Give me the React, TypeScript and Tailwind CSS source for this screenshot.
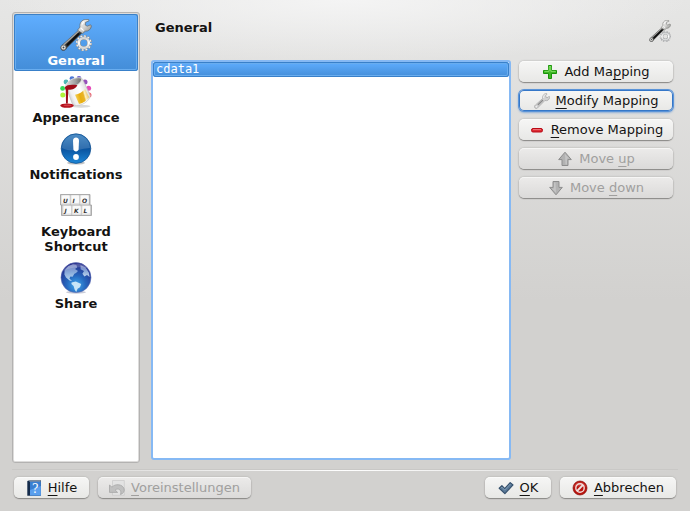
import React from 'react';

type IconProps = { className?: string };

const ToolsIcon: React.FC<IconProps> = ({ className }) => (
  <svg viewBox="0 0 32 32" className={className} aria-hidden="true">
    <defs>
      <linearGradient id="steel" x1="0" y1="0" x2="1" y2="1">
        <stop offset="0" stopColor="#ffffff" />
        <stop offset="0.5" stopColor="#d6d6d4" />
        <stop offset="1" stopColor="#848582" />
      </linearGradient>
      <linearGradient id="gear" x1="0" y1="0" x2="0" y2="1">
        <stop offset="0" stopColor="#d0d2d3" />
        <stop offset="0.5" stopColor="#ffffff" />
        <stop offset="1" stopColor="#d3d5d6" />
      </linearGradient>
    </defs>
    <path d="M19.5 10.2 L1.4 26.4 C-.4 28.4 .6 31.5 3.2 31.7 C5.2 31.8 6.4 30.4 6.9 29 L22.6 13.4 Z" fill="#3a3a39" />
    <path d="M18.6 11.2 L3 25.5 L4 26.6 L19.8 12.2 Z" fill="#a3a3a1" />
    <path d="M7.5 25.8 L18.5 15" stroke="#0f0f0f" strokeWidth="2" strokeLinecap="round" />
    <circle cx="3.5" cy="28.5" r="2.3" fill="#efefed" stroke="#8b8b89" strokeWidth="0.8" />
    <circle cx="3.5" cy="28.5" r="1" fill="#454545" />
    <path
      d="M20 8 C19.4 4 21.6 .8 25.8 .4 L28.6 .5 L29 1.8 L25.6 3.3 L25.2 6 L27.2 7.2 L30.6 5.8 L31.4 7 C31 10.2 28.6 12.4 25.2 12.2 L22.6 14.6 L17.6 11.2 Z"
      fill="url(#steel)"
      stroke="#5a5a58"
      strokeWidth="0.6"
    />
    <path d="M20.8 9 L23.6 11.6 M22 5.5 L24 2.4" stroke="#fff" strokeWidth="1.2" />
    <circle cx="23.8" cy="24" r="6.7" fill="none" stroke="#8b8d8f" strokeWidth="3" strokeDasharray="2.3 1.208" />
    <circle cx="23.8" cy="24" r="6.6" fill="none" stroke="#f2f2f2" strokeWidth="2.2" strokeDasharray="1.8 1.656" />
    <circle cx="23.8" cy="24" r="4.9" fill="none" stroke="#8f9193" strokeWidth="3.2" />
    <circle cx="23.8" cy="24" r="5" fill="none" stroke="url(#gear)" strokeWidth="2.4" />
  </svg>
);

const PaintIcon: React.FC<IconProps> = ({ className }) => (
  <svg viewBox="0 0 32 32" className={className} aria-hidden="true">
    <defs>
      <linearGradient id="can" x1="0.1" y1="0.7" x2="0.95" y2="0.3">
        <stop offset="0" stopColor="#c4c4c4" />
        <stop offset="0.2" stopColor="#f2f2f2" />
        <stop offset="0.6" stopColor="#ffffff" />
        <stop offset="0.85" stopColor="#e2e2e2" />
        <stop offset="1" stopColor="#a6a6a6" />
      </linearGradient>
      <linearGradient id="label" x1="0" y1="0.6" x2="1" y2="0.3">
        <stop offset="0" stopColor="#f5d564" />
        <stop offset="0.35" stopColor="#e9ae0e" />
        <stop offset="0.6" stopColor="#e8b429" />
        <stop offset="0.7" stopColor="#fdf1c2" />
        <stop offset="1" stopColor="#e3b548" />
      </linearGradient>
      <linearGradient id="inside" x1="0" y1="0" x2="1" y2="0">
        <stop offset="0" stopColor="#e2e2e2" />
        <stop offset="0.6" stopColor="#a2a2a2" />
        <stop offset="1" stopColor="#6d6d6d" />
      </linearGradient>
    </defs>
    <circle cx="6" cy="6" r="2.4" fill="#4fb9b4" />
    <circle cx="12" cy="2.6" r="2.4" fill="#4d77d6" />
    <circle cx="19" cy="2.4" r="2.4" fill="#6c5cc6" />
    <circle cx="25" cy="6" r="2.5" fill="#9550bb" />
    <circle cx="28.6" cy="12.3" r="2.5" fill="#e54cba" />
    <circle cx="29" cy="19" r="2.5" fill="#f46372" />
    <circle cx="2.6" cy="12.4" r="2.4" fill="#35d957" />
    <circle cx="2.8" cy="19" r="2.5" fill="#b0f33b" />
    <ellipse cx="21" cy="30.2" rx="9.5" ry="1.5" fill="#d9d9d9" />
    <path d="M5.6 10 L20.6 2 C22 2.2 22.6 3 23 4 L30.4 19.5 C29.6 25.4 20.6 31 13.8 29.2 C12.8 28.6 12.5 28 12 27 Z" fill="url(#can)" stroke="#bcbcbc" strokeWidth="0.6" />
    <path d="M15 18.8 C19 17.9 22.6 16 25 12.9 L29.2 21.2 C27 24.6 23.4 27 19 28 Z" fill="url(#label)" />
    <path d="M5.5 10.4 C5.6 5.4 14.6 .4 21 2 C23.6 4.6 16.4 13 5.5 10.4 Z" fill="url(#inside)" stroke="#e2e2e2" strokeWidth="0.8" />
    <path d="M4.8 11.4 C6.4 8.4 12.5 8.4 17.4 9.2 C16 12.4 12 14 8.2 13.8 L7.8 27.5 L6 27.5 L5.8 14.6 Z" fill="#9f0b17" />
    <ellipse cx="7" cy="29.6" rx="6.8" ry="2.2" fill="#b5121d" />
    <ellipse cx="7.5" cy="29.3" rx="4" ry="0.9" fill="#d23b45" />
  </svg>
);

const AlertIcon: React.FC<IconProps> = ({ className }) => (
  <svg viewBox="0 0 32 32" className={className} aria-hidden="true">
    <defs>
      <linearGradient id="alert" x1="0" y1="0" x2="0" y2="1">
        <stop offset="0" stopColor="#2d78bb" />
        <stop offset="0.5" stopColor="#0a539f" />
        <stop offset="1" stopColor="#1d86d6" />
      </linearGradient>
    </defs>
    <ellipse cx="16" cy="30" rx="9" ry="1.6" fill="#c4c4c4" />
    <circle cx="16" cy="15.6" r="14.8" fill="url(#alert)" stroke="#0a4a8d" strokeWidth="0.7" />
    <path d="M2 15 C2.4 7 8.6 1.6 16 1.6 C23.4 1.6 29.6 7 30 15 C23 15.4 10 20 2 15 Z" fill="#fff" opacity="0.16" />
    <path d="M13 7.6 C13 3.4 19 3.4 19 7.6 L18.6 16.6 C18.2 19 13.8 19 13.4 16.6 Z" fill="#fff" />
    <circle cx="16" cy="24" r="2.9" fill="#fff" />
  </svg>
);

const keys = [
  { letter: 'U', x: 1, y: 6 },
  { letter: 'I', x: 10.5, y: 6 },
  { letter: 'O', x: 20, y: 6 },
  { letter: 'J', x: 2.5, y: 16.5 },
  { letter: 'K', x: 12, y: 16.5 },
  { letter: 'L', x: 21.5, y: 16.5 },
];

const KeyboardIcon: React.FC<IconProps> = ({ className }) => (
  <svg viewBox="0 0 32 32" className={className} aria-hidden="true">
    <path d="M0.5 4.5 H30 V15 H31.5 V25.5 H1.5 V15 H0.5 Z" fill="#bdbdbd" stroke="#a0a0a0" strokeWidth="0.8" />
    {keys.map((key) => (
      <g key={key.letter}>
        <rect x={key.x} y={key.y - 1} width="9" height="9.5" rx="1" fill="#e2e2e2" />
        <rect x={key.x + 1} y={key.y - 0.5} width="7.5" height="7.5" rx="1" fill="#fafafa" />
        <text
          x={key.x + 2}
          y={key.y + 6.5}
          fontSize="6"
          fontStyle="italic"
          fontFamily="DejaVu Sans, sans-serif"
          fill="#333"
        >
          {key.letter}
        </text>
      </g>
    ))}
  </svg>
);

const GlobeIcon: React.FC<IconProps> = ({ className }) => (
  <svg viewBox="0 0 32 32" className={className} aria-hidden="true">
    <defs>
      <radialGradient id="globe" cx="0.5" cy="0.75" r="0.7">
        <stop offset="0" stopColor="#3fa9ee" />
        <stop offset="0.45" stopColor="#2668be" />
        <stop offset="1" stopColor="#252c8a" />
      </radialGradient>
      <linearGradient id="land" x1="0" y1="0" x2="0" y2="1">
        <stop offset="0" stopColor="#8590cc" />
        <stop offset="0.5" stopColor="#a3c3e8" />
        <stop offset="1" stopColor="#e4f5fd" />
      </linearGradient>
    </defs>
    <ellipse cx="16" cy="30.2" rx="10" ry="1.5" fill="#c9cbd6" />
    <circle cx="16" cy="15.6" r="15" fill="url(#globe)" stroke="#5c6cb4" strokeWidth="0.6" />
    <g fill="url(#land)" opacity="0.8">
      <path d="M4.6 8.6 L8.4 4 L13 2.2 L16.4 3 L17.2 5.4 L15 7 L18 9 L16 11 L14.4 11.8 L12.6 14.8 L10.4 14.6 L9.4 16.6 L12 19 L9.6 18.6 L6 15.6 L4.4 12.6 Z" />
      <path d="M20.5 3 L25.6 5.6 L28.8 10.6 L29.6 15 L27 13 L24.4 14.6 L22.4 11.8 L24 9 L20.6 7.2 Z" />
    </g>
    <path d="M11.6 20.4 L15.8 19.4 L21.2 22 L20 25.3 L17.6 26.8 L16.2 30 L14.6 27.4 L13.6 24 L11.4 22 Z" fill="#d7eefa" opacity="0.9" />
    <path d="M3.4 9 C7 1.5 21 -1.5 27.4 6 C19 4.5 10 5 3.4 9 Z" fill="#fff" opacity="0.2" />
  </svg>
);

const WrenchIcon: React.FC<IconProps> = ({ className }) => (
  <svg viewBox="0 0 16 16" className={className} aria-hidden="true">
    <path
      d="M8.7 5.4 C8.2 2.5 10 .5 12.6 .4 L13 1.3 L11.6 2.6 L12.2 4.5 L14 4.4 L15.1 3.2 L15.7 4.2 C15.5 6.8 13.2 8.3 10.9 7.5 L4.2 14.3 C3.3 16 .7 15.8 .5 13.9 C.4 12.8 1.2 12.1 1.8 11.7 Z"
      fill="#d2d2d2"
      stroke="#a3a3a3"
      strokeWidth="0.7"
    />
    <path d="M3.8 12 L9 7" stroke="#8a8a8a" strokeWidth="1.3" />
    <path d="M9.7 5 C9.4 3 10.2 1.9 11.6 1.3" fill="none" stroke="#f8f8f8" strokeWidth="0.9" />
    <circle cx="2.3" cy="13.7" r="0.8" fill="#f4f4f4" />
  </svg>
);

const PlusIcon: React.FC<IconProps> = ({ className }) => (
  <svg viewBox="0 0 16 16" className={className} aria-hidden="true">
    <path d="M6.5 1.5 H9.5 V6.5 H14.5 V9.5 H9.5 V14.5 H6.5 V9.5 H1.5 V6.5 H6.5 Z" fill="#3fb726" stroke="#189309" strokeWidth="1" strokeLinejoin="round" />
    <path d="M7.2 7.3 V2.5 H8.8 V7.3 H13.7 M2.5 7.3 H7" fill="none" stroke="#8ce46d" strokeWidth="0.9" />
  </svg>
);

const MinusIcon: React.FC<IconProps> = ({ className }) => (
  <svg viewBox="0 0 16 16" className={className} aria-hidden="true">
    <rect x="2.5" y="6.5" width="11" height="3.5" rx="1.5" fill="#dc2830" stroke="#b90a16" strokeWidth="1" />
    <path d="M4 7.6 H12" stroke="#f1767a" strokeWidth="1" />
  </svg>
);

const ArrowIcon: React.FC<IconProps> = ({ className }) => (
  <svg viewBox="0 0 16 16" className={className} aria-hidden="true">
    <path d="M8 1.2 L14.3 8.6 H11 V14.5 H5 V8.6 H1.7 Z" fill="#b2b2b2" stroke="#8d8d8d" strokeWidth="1" strokeLinejoin="round" />
    <path d="M8 3 L12 7.6 H10 V13.4 H8.5 Z" fill="#c4c4c4" />
  </svg>
);

const BookIcon: React.FC<IconProps> = ({ className }) => (
  <svg viewBox="0 0 16 16" className={className} aria-hidden="true">
    <path d="M1.3 1 L3.7 .3 H14.8 V15.8 H1.3 Z" fill="#142b4b" />
    <rect x="4" y="1.5" width="10.8" height="14" fill="#397fd2" />
    <path d="M4 10 L14.8 6 V15.5 H4 Z" fill="#5b9fed" />
    <path d="M3.2 1 H14.3" stroke="#dbe5ed" strokeWidth="0.7" />
    <text x="6" y="13" fontSize="12" fontFamily="DejaVu Serif, serif" fill="#fff">?</text>
  </svg>
);

const UndoIcon: React.FC<IconProps> = ({ className }) => (
  <svg viewBox="0 0 16 16" className={className} aria-hidden="true">
    <path d="M3.5 .5 H15.3 V15.3 H3.5 Z" fill="#e3e3e3" stroke="#c9c9c9" strokeWidth="0.7" />
    <path d="M.5 5 L3 7.2 C6 3.4 13.6 3.8 15.2 9 C15.7 11.6 14 13.8 11.4 14.5 C13.2 10.6 9.6 7.4 6.2 10 L8.6 12.4 H.5 Z" fill="#c0c0c0" stroke="#a0a0a0" strokeWidth="0.7" strokeLinejoin="round" />
  </svg>
);

const CheckIcon: React.FC<IconProps> = ({ className }) => (
  <svg viewBox="0 0 16 16" className={className} aria-hidden="true">
    <path d="M1.2 8.2 L3.9 5.7 L6.7 8.6 L12.2 2.6 L15 4.9 L6.9 13.6 Z" fill="#5b7a99" stroke="#36516d" strokeWidth="1.2" strokeLinejoin="round" />
    <path d="M2.7 8.2 L3.9 7.1 L6.7 10.1 L12.4 4" fill="none" stroke="#8aa4bd" strokeWidth="0.8" />
  </svg>
);

const CancelIcon: React.FC<IconProps> = ({ className }) => (
  <svg viewBox="0 0 16 16" className={className} aria-hidden="true">
    <circle cx="8" cy="8" r="7" fill="#b9140e" stroke="#8b0d09" strokeWidth="0.7" />
    <path d="M2 6.5 C3.5 .8 12.5 .8 14 6.5 Z" fill="#e06761" opacity="0.45" />
    <circle cx="8" cy="8" r="4.2" fill="none" stroke="#f0dedd" strokeWidth="1.4" />
    <path d="M5.2 10.8 L10.8 5.2" stroke="#f0e6e5" strokeWidth="1.9" />
  </svg>
);

type PushButtonProps = {
  icon: React.ReactNode;
  children: React.ReactNode;
  disabled?: boolean;
  focused?: boolean;
  className?: string;
};

const PushButton: React.FC<PushButtonProps> = ({ icon, children, disabled, focused, className = '' }) => (
  <button
    type="button"
    disabled={disabled}
    className={`flex h-[21px] items-center justify-center gap-1.5 whitespace-nowrap rounded-[5px] bg-linear-to-b ${
      disabled ? 'from-[#ecebea] to-[#dbdad9] text-[#a09f9e]' : 'from-[#f6f6f5] to-[#e8e8e6] text-[#141312]'
    } ${
      focused
        ? 'shadow-[inset_0_0_0_1px_#3577c8,0_0_0_1px_#5b94d8,0_1px_2px_1px_#8fb0d8]'
        : 'shadow-[inset_0_1px_0_#fff8,0_1px_1px_#8a8987,0_0_2px_#a3a2a0]'
    } ${className}`}
  >
    {icon}
    <span>{children}</span>
  </button>
);

const Key: React.FC<{ children: string }> = ({ children }) => (
  <span className="underline decoration-1 underline-offset-3 [text-decoration-skip-ink:none]">{children}</span>
);

const pages = [
  { label: 'General', Icon: ToolsIcon },
  { label: 'Appearance', Icon: PaintIcon },
  { label: 'Notifications', Icon: AlertIcon },
  { label: 'Keyboard Shortcut', Icon: KeyboardIcon },
  { label: 'Share', Icon: GlobeIcon },
];

const App: React.FC = () => (
  <div className="flex min-h-screen flex-col bg-[#d2d1cf] bg-[radial-gradient(ellipse_345px_64px_at_50%_0,#f4f4f4,transparent),linear-gradient(#e6e6e5,#d2d1cf_300px)] p-3 font-['DejaVu_Sans',sans-serif] text-[13px] leading-[15px] text-[#141312]">
    <div className="flex flex-1 gap-[11px]">
      <nav className="w-32 shrink-0 rounded-[3px] border border-[#b3b2b1] bg-white p-px shadow-[inset_0_0_0_1px_#dddcdb,inset_0_1px_0_1px_#b9b8b7]">
        {pages.map(({ label, Icon }, i) => (
          <button
            key={label}
            type="button"
            aria-current={i === 0 ? 'page' : undefined}
            className={`flex w-full flex-col items-center gap-0.5 px-4 pt-[5px] pb-[3px] font-bold ${
              i === 0
                ? 'rounded-[3px] bg-linear-to-b from-[#60aeff] to-[#438dd8] text-white shadow-[inset_0_0_0_1px_#3980c9,inset_0_0_0_2px_#69adef]'
                : ''
            }`}
          >
            <Icon className="size-8" />
            <span>{label}</span>
          </button>
        ))}
      </nav>

      <main className="flex min-w-0 flex-1 flex-col pb-[3px]">
        <header className="flex h-12 items-start justify-between pt-2 pr-[7px] pl-1">
          <h1 className="font-bold">General</h1>
          <ToolsIcon className="size-[22px]" />
        </header>
        <div className="flex flex-1 gap-2 pr-[5px]">
          <ul role="listbox" aria-label="Mappings" className="min-w-0 flex-1 rounded-[3px] border-2 border-[#86b9f4] bg-white">
            <li
              role="option"
              aria-selected="true"
              className="rounded-[3px] bg-linear-to-b from-[#60aeff] to-[#438dd8] px-[3px] font-['DejaVu_Sans_Mono',monospace] text-[12px] text-white shadow-[inset_0_0_0_1px_#3980c9,inset_0_0_0_2px_#69adef]"
            >
              cdata1
            </li>
          </ul>
          <div className="flex w-[154px] shrink-0 flex-col gap-2 pt-px">
            <PushButton icon={<PlusIcon className="size-4" />}>
              Add Ma<Key>p</Key>ping
            </PushButton>
            <PushButton focused icon={<WrenchIcon className="size-4" />}>
              <Key>M</Key>odify Mapping
            </PushButton>
            <PushButton icon={<MinusIcon className="size-4" />}>
              <Key>R</Key>emove Mapping
            </PushButton>
            <PushButton disabled icon={<ArrowIcon className="size-4" />}>
              Move <Key>u</Key>p
            </PushButton>
            <PushButton disabled icon={<ArrowIcon className="size-4 rotate-180" />}>
              Move <Key>d</Key>own
            </PushButton>
          </div>
        </div>
      </main>
    </div>

    <div className="mt-1.5 h-0.5 bg-linear-to-r from-transparent via-white to-transparent shadow-[inset_0_1px_0_#c9c8c6]" />

    <footer className="mt-1.5 flex gap-[9px] pr-0.5 pb-px pl-0.5">
      <PushButton className="w-[75px]" icon={<BookIcon className="size-4" />}>
        <Key>H</Key>ilfe
      </PushButton>
      <PushButton className="w-[153px]" disabled icon={<UndoIcon className="size-4" />}>
        <Key>V</Key>oreinstellungen
      </PushButton>
      <PushButton className="ml-auto w-[66px]" icon={<CheckIcon className="size-4" />}>
        <Key>O</Key>K
      </PushButton>
      <PushButton className="w-[116px]" icon={<CancelIcon className="size-4" />}>
        <Key>A</Key>bbrechen
      </PushButton>
    </footer>
  </div>
);

export default App;
